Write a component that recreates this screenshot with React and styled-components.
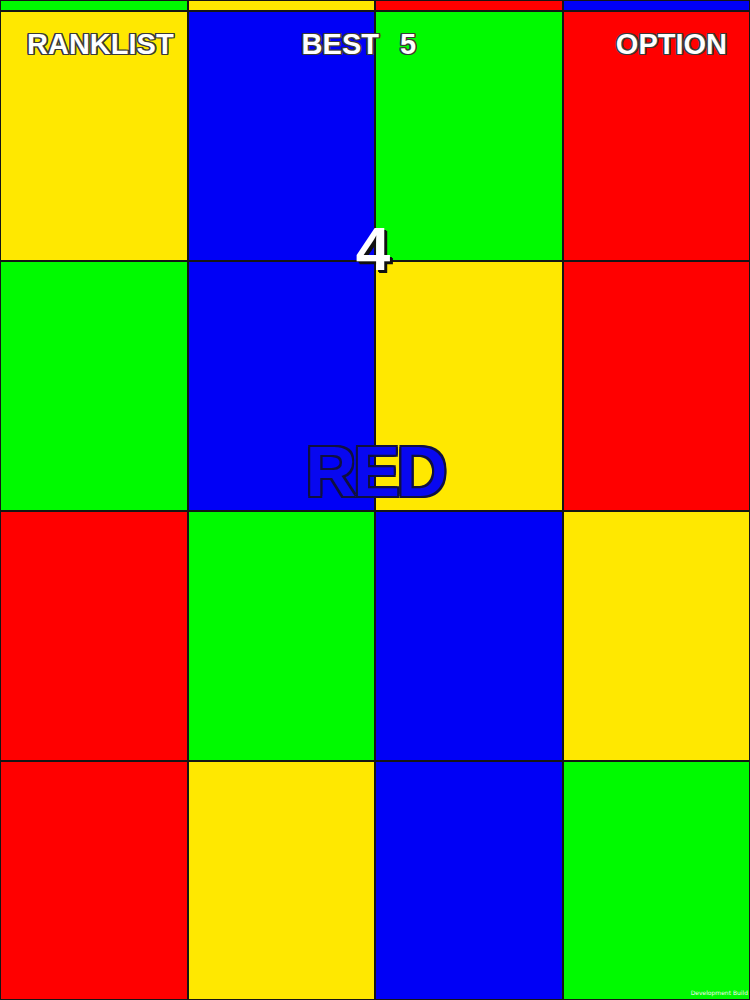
import React from "react";
import styled, { createGlobalStyle } from "styled-components";

const GlobalStyle = createGlobalStyle`
  html, body {
    margin: 0;
    padding: 0;
    background: #000;
  }
  body {
    font-family: "Liberation Sans", Arial, sans-serif;
  }
`;

const COLORS = {
  yellow: "#ffe800",
  blue: "#0000f6",
  green: "#00fa00",
  red: "#ff0000",
};

const ROWS = [
  ["green", "yellow", "red", "blue"],
  ["yellow", "blue", "green", "red"],
  ["green", "blue", "yellow", "red"],
  ["red", "green", "blue", "yellow"],
  ["red", "yellow", "blue", "green"],
];

const outline = (c, w) =>
  [
    [w, 0],
    [-w, 0],
    [0, w],
    [0, -w],
    [w, w],
    [-w, -w],
    [w, -w],
    [-w, w],
  ]
    .map(([x, y]) => `${x}px ${y}px 0 ${c}`)
    .join(", ");

const Screen = styled.div`
  position: relative;
  width: 750px;
  height: 1000px;
  overflow: hidden;
`;

const Board = styled.div`
  display: grid;
  grid-template-columns: repeat(4, 1fr);
  grid-template-rows: 11px repeat(3, 250px) 1fr;
  height: 100%;
`;

const Tile = styled.div`
  background: ${(p) => COLORS[p.$color]};
  border: 1px solid #151515;
`;

/* everything drawn on top of the board */
const Overlay = styled.div`
  position: absolute;
  inset: 0;
  display: flex;
  flex-direction: column;
  padding-top: 30px;
  pointer-events: none;
`;

const Hud = styled.div`
  display: flex;
  align-items: baseline;
  padding: 0 23px 0 27px;
  font-size: 29px;
  line-height: 1;
  font-weight: bold;
  color: #fff;
  text-shadow: ${outline("#3a3a3a", 1.4)};
`;

const HudButton = styled.span`
  margin-left: ${(p) => (p.$push ? "auto" : "0")};
  margin-right: ${(p) => p.$gap || "0"};
`;

const BestValue = styled.span`
  margin-left: 21px;
`;

const Score = styled.div`
  margin: 159px 4px 0 0;
  align-self: center;
  font-size: 62px;
  line-height: 1;
  font-weight: bold;
  color: #fff;
  text-shadow: 3px 3px 0 #111, 2px 2px 0 #111;
`;

const Word = styled.div`
  margin-top: 157px;
  align-self: center;
  font-size: 70px;
  line-height: 1;
  font-weight: bold;
  letter-spacing: -3px;
  color: ${(p) => p.$color};
  text-shadow: ${outline("#101040", 2)};
`;

const BuildTag = styled.div`
  align-self: flex-end;
  margin: auto 2px 4px 0;
  font-size: 6px;
  color: #f4f4f4;
  font-family: "DejaVu Sans", sans-serif;
`;

export default function App() {
  return (
    <Screen>
      <GlobalStyle />
      <Board>
        {ROWS.map((row, r) =>
          row.map((c, i) => <Tile key={`${r}-${i}`} $color={c} />)
        )}
      </Board>
      <Overlay>
        <Hud>
          <HudButton $gap="128px">RANKLIST</HudButton>
          <span>
            BEST<BestValue>5</BestValue>
          </span>
          <HudButton $push>OPTION</HudButton>
        </Hud>
        <Score>4</Score>
        <Word $color="#0808f0">RED</Word>
        <BuildTag>Development Build</BuildTag>
      </Overlay>
    </Screen>
  );
}
